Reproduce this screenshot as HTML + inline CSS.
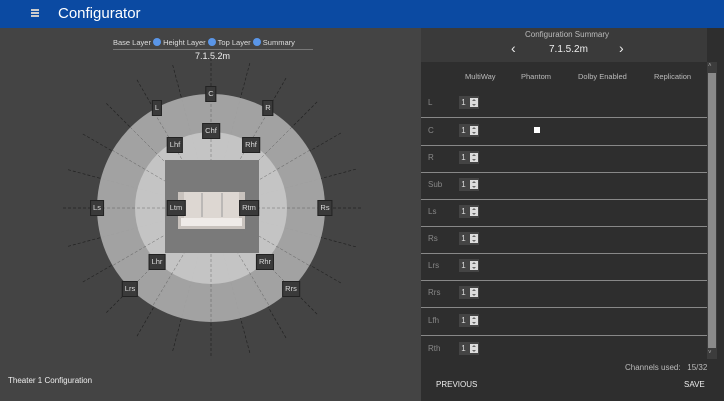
<!DOCTYPE html><html><head><style>
body{margin:0;width:724px;height:401px;overflow:hidden;background:#444;font-family:"Liberation Sans",sans-serif;position:relative}
.hdr{position:absolute;left:0;top:0;width:724px;height:28px;background:#0b4aa2;color:#fff}
.lbl{position:absolute;background:#3a3a3a;color:#ddd;font-size:7.5px;padding:3px 2px;transform:translate(-50%,-50%);border:1px solid #222;line-height:8px}
.rp{position:absolute;left:421px;top:28px;width:303px;height:373px;background:#2e2e2e}
.row{position:absolute;left:0;width:286px;height:27px;border-bottom:1px solid #888;color:#888;font-size:8px}
.row span{position:absolute;left:7px;top:8px}
.sp{position:absolute;left:38px;top:6px;width:20px;height:13px;line-height:13px;background:#444;color:#ddd;font-size:8px}
.sp i{position:absolute;right:1px;top:2px;width:8px;height:9px;background:#ddd}
.sp i:before{content:"";position:absolute;left:2px;top:1px;border:2px solid transparent;border-bottom:2px solid #666;border-top:0}
.sp i:after{content:"";position:absolute;left:2px;bottom:1px;border:2px solid transparent;border-top:2px solid #666;border-bottom:0}
</style></head><body>
<div class="hdr"><div style="position:absolute;left:31px;top:9px;width:8px;height:1.5px;background:#ccc;box-shadow:0 3px #ccc,0 6px #ccc"></div><div style="position:absolute;left:58px;top:5px;font-size:15px">Configurator</div></div>
<div style="position:absolute;left:113px;top:38px;font-size:7.5px;color:#ddd;white-space:nowrap;width:200px;border-bottom:1px solid #777;padding-bottom:2px">Base Layer <b style="display:inline-block;width:8px;height:8px;border-radius:50%;background:#5a96e8;vertical-align:-1px"></b> Height Layer <b style="display:inline-block;width:8px;height:8px;border-radius:50%;background:#5a96e8;vertical-align:-1px"></b> Top Layer <b style="display:inline-block;width:8px;height:8px;border-radius:50%;background:#5a96e8;vertical-align:-1px"></b> Summary</div>
<div style="position:absolute;left:195px;top:51px;font-size:9px;color:#eee">7.1.5.2m</div>
<svg style="position:absolute;left:0;top:0" width="420" height="401">
<g stroke="#222" stroke-width=".7" stroke-dasharray="3,2">
<line x1="211" y1="58" x2="211" y2="358" transform="rotate(0 211 208)"/><line x1="211" y1="58" x2="211" y2="358" transform="rotate(15 211 208)"/><line x1="211" y1="58" x2="211" y2="358" transform="rotate(30 211 208)"/><line x1="211" y1="58" x2="211" y2="358" transform="rotate(45 211 208)"/><line x1="211" y1="58" x2="211" y2="358" transform="rotate(60 211 208)"/><line x1="211" y1="58" x2="211" y2="358" transform="rotate(75 211 208)"/><line x1="211" y1="58" x2="211" y2="358" transform="rotate(90 211 208)"/><line x1="211" y1="58" x2="211" y2="358" transform="rotate(105 211 208)"/><line x1="211" y1="58" x2="211" y2="358" transform="rotate(120 211 208)"/><line x1="211" y1="58" x2="211" y2="358" transform="rotate(135 211 208)"/><line x1="211" y1="58" x2="211" y2="358" transform="rotate(150 211 208)"/><line x1="211" y1="58" x2="211" y2="358" transform="rotate(165 211 208)"/>
</g>
<circle cx="211" cy="208" r="114" fill="#a9a9a9" fill-opacity=".93"/>
<circle cx="211" cy="208" r="76" fill="#c6c6c6" fill-opacity=".93"/>
<g stroke="#444" stroke-width=".5" stroke-dasharray="3,2" opacity=".7">
<line x1="211" y1="94" x2="211" y2="322"/><line x1="97" y1="208" x2="325" y2="208"/><line x1="130" y1="127" x2="292" y2="289"/><line x1="292" y1="127" x2="130" y2="289"/>
<line x1="152" y1="109" x2="270" y2="307"/><line x1="270" y1="109" x2="152" y2="307"/><line x1="112" y1="150" x2="310" y2="266"/><line x1="310" y1="150" x2="112" y2="266"/>
</g>
<rect x="165" y="160" width="94" height="93" fill="#7a7a7a"/>
<rect x="178" y="192" width="67" height="37" fill="#c8c2bd"/><rect x="184" y="192" width="55" height="26" fill="#ddd7d2"/><rect x="181" y="218" width="61" height="8" fill="#efebe8"/>
<line x1="202" y1="193" x2="202" y2="217" stroke="#999"/><line x1="222" y1="193" x2="222" y2="217" stroke="#999"/>
</svg>
<div class="lbl" style="left:211px;top:94px">C</div><div class="lbl" style="left:157px;top:108px">L</div><div class="lbl" style="left:268px;top:108px">R</div>
<div class="lbl" style="left:211px;top:131px">Chf</div><div class="lbl" style="left:175px;top:145px">Lhf</div><div class="lbl" style="left:251px;top:145px">Rhf</div>
<div class="lbl" style="left:176px;top:208px">Ltm</div><div class="lbl" style="left:249px;top:208px">Rtm</div><div class="lbl" style="left:97px;top:208px">Ls</div><div class="lbl" style="left:325px;top:208px">Rs</div>
<div class="lbl" style="left:157px;top:262px">Lhr</div><div class="lbl" style="left:265px;top:262px">Rhr</div><div class="lbl" style="left:130px;top:289px">Lrs</div><div class="lbl" style="left:291px;top:289px">Rrs</div>
<div style="position:absolute;left:8px;top:376px;font-size:8px;color:#eee">Theater 1 Configuration</div>
<div class="rp">
<div style="position:absolute;left:0;top:0;width:286px;height:34px;background:#3a3a3a"></div>
<div style="position:absolute;left:104px;top:2px;font-size:8px;color:#bbb">Configuration Summary</div>
<div style="position:absolute;left:90px;top:12px;font-size:14px;color:#eee">‹</div>
<div style="position:absolute;left:128px;top:16px;font-size:10px;color:#eee">7.1.5.2m</div>
<div style="position:absolute;left:198px;top:12px;font-size:14px;color:#eee">›</div>
<div style="position:absolute;top:44px;font-size:7.5px;color:#bbb;left:44px">MultiWay</div>
<div style="position:absolute;top:44px;font-size:7.5px;color:#bbb;left:100px">Phantom</div>
<div style="position:absolute;top:44px;font-size:7.5px;color:#bbb;left:157px">Dolby Enabled</div>
<div style="position:absolute;top:44px;font-size:7.5px;color:#bbb;left:233px">Replication</div>
<div class="row" style="top:62px"><span>L</span><div class="sp">&nbsp;1<i></i></div></div>
<div class="row" style="top:90px"><span>C</span><div class="sp">&nbsp;1<i></i></div><div style="position:absolute;left:113px;top:9px;width:6px;height:6px;background:#fff"></div></div>
<div class="row" style="top:117px"><span>R</span><div class="sp">&nbsp;1<i></i></div></div>
<div class="row" style="top:144px"><span>Sub</span><div class="sp">&nbsp;1<i></i></div></div>
<div class="row" style="top:171px"><span>Ls</span><div class="sp">&nbsp;1<i></i></div></div>
<div class="row" style="top:198px"><span>Rs</span><div class="sp">&nbsp;1<i></i></div></div>
<div class="row" style="top:225px"><span>Lrs</span><div class="sp">&nbsp;1<i></i></div></div>
<div class="row" style="top:252px"><span>Rrs</span><div class="sp">&nbsp;1<i></i></div></div>
<div class="row" style="top:280px"><span>Lfh</span><div class="sp">&nbsp;1<i></i></div></div>
<div class="row" style="top:308px;border:0"><span>Rth</span><div class="sp">&nbsp;1<i></i></div></div>
<div style="position:absolute;left:286px;top:34px;width:10px;height:297px;background:#3c3c3c"></div>
<div style="position:absolute;left:287px;top:45px;width:8px;height:275px;background:#8a8a8a"></div>
<div style="position:absolute;left:287px;top:35px;font-size:6px;color:#aaa">˄</div>
<div style="position:absolute;left:287px;top:322px;font-size:6px;color:#aaa">˅</div>
<div style="position:absolute;left:204px;top:335px;font-size:8px;color:#bbb">Channels used:&nbsp;&nbsp; 15/32</div>
<div style="position:absolute;left:15px;top:352px;font-size:8px;color:#eee">PREVIOUS</div>
<div style="position:absolute;left:263px;top:352px;font-size:8px;color:#eee">SAVE</div>
</div>
</body></html>
